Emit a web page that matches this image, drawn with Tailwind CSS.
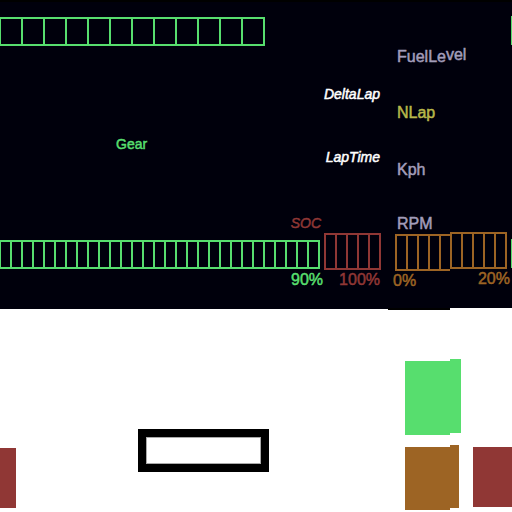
<!DOCTYPE html>
<html lang="en">
<head>
<meta charset="utf-8">
<title>Dashboard sprites</title>
<script src="https://cdn.jsdelivr.net/npm/@tailwindcss/browser@4"></script>
</head>
<body class="min-h-screen overflow-hidden bg-white font-['Liberation_Sans',Arial,sans-serif] leading-5">
<main>
  <section class="flex items-start" aria-label="Telemetry">
    <!-- Charge, gear and lap readouts -->
    <div class="min-w-0 flex-1 border-t-2 border-black bg-[#00000c] pt-[15px] pb-5">
      <div class="-ml-px flex h-[29px] w-[266px] border-2 border-r-0 border-[#57de6e] text-[#57de6e]">
        <i class="flex-1 border-r-2"></i><i class="flex-1 border-r-2"></i><i class="flex-1 border-r-2"></i><i class="flex-1 border-r-2"></i><i class="flex-1 border-r-2"></i><i class="flex-1 border-r-2"></i><i class="flex-1 border-r-2"></i><i class="flex-1 border-r-2"></i><i class="flex-1 border-r-2"></i><i class="flex-1 border-r-2"></i><i class="flex-1 border-r-2"></i><i class="flex-1 border-r-2"></i>
      </div>
      <p class="mt-[38px] pr-2 text-right text-sm leading-5 text-white italic [-webkit-text-stroke:0.5px]">DeltaLap</p>
      <div class="mt-[30px] flex h-[33px] justify-between pr-2 pl-[116px] text-sm leading-5">
        <p class="text-[#57de6e] [-webkit-text-stroke:0.5px]">Gear</p>
        <p class="self-end text-white italic [-webkit-text-stroke:0.5px]">LapTime</p>
      </div>
      <p class="mt-[46px] pr-[67px] text-right text-sm leading-5 text-[#903735] italic [-webkit-text-stroke:0.5px]">SOC</p>
      <div class="flex items-start gap-1 pr-[7px]">
        <div class="mt-[7px] -ml-px flex h-[29px] min-w-0 flex-1 border-2 border-r-0 border-[#57de6e] text-[#57de6e]">
          <i class="flex-1 border-r-2"></i><i class="flex-1 border-r-2"></i><i class="flex-1 border-r-2"></i><i class="flex-1 border-r-2"></i><i class="flex-1 border-r-2"></i><i class="flex-1 border-r-2"></i><i class="flex-1 border-r-2"></i><i class="flex-1 border-r-2"></i><i class="flex-1 border-r-2"></i><i class="flex-1 border-r-2"></i><i class="flex-1 border-r-2"></i><i class="flex-1 border-r-2"></i><i class="flex-1 border-r-2"></i><i class="flex-1 border-r-2"></i><i class="flex-1 border-r-2"></i><i class="flex-1 border-r-2"></i><i class="flex-1 border-r-2"></i><i class="flex-1 border-r-2"></i><i class="flex-1 border-r-2"></i><i class="flex-1 border-r-2"></i><i class="flex-1 border-r-2"></i><i class="flex-1 border-r-2"></i><i class="flex-1 border-r-2"></i><i class="flex-1 border-r-2"></i><i class="flex-1 border-r-2"></i><i class="flex-1 border-r-2"></i><i class="flex-1 border-r-2"></i><i class="flex-1 border-r-2"></i><i class="flex-1 border-r-2"></i>
        </div>
        <div class="flex h-[37px] w-[57px] border-2 border-r-0 border-[#903735] text-[#903735]">
          <i class="flex-1 border-r-2"></i><i class="flex-1 border-r-2"></i><i class="flex-1 border-r-2"></i><i class="flex-1 border-r-2"></i><i class="flex-1 border-r-2"></i>
        </div>
      </div>
      <div class="flex h-[19px] justify-end gap-4 pr-2 text-base leading-5 [-webkit-text-stroke:0.5px]">
        <p class="text-[#57de6e]">90%</p>
        <p class="text-[#903735]">100%</p>
      </div>
    </div>

    <!-- Fuel, lap count, speed and engine readouts -->
    <div class="w-[124px] shrink-0">
      <div class="flex border-t-2 border-black bg-[#00000c]">
        <div class="flex-1 pt-[45px] pb-5 text-base leading-5 text-[#a29dba] [-webkit-text-stroke:0.5px]">
          <p class="pl-[9px]">FuelLe<span class="align-[2px] leading-4">vel</span></p>
          <p class="mt-9 pl-[9px] text-[#b8b84a]">NLap</p>
          <p class="mt-[37px] pl-[9px]">Kph</p>
          <p class="mt-[34px] pl-[9px]">RPM</p>
          <div class="-mt-[2px] flex items-start pl-[7px] text-[#9d6424]">
            <div class="mt-[2px] flex h-[37px] w-[55px] border-2 border-r-0">
              <i class="w-[11px] border-r-2"></i><i class="w-[11px] border-r-2"></i><i class="w-[11px] border-r-2"></i><i class="w-[11px] border-r-2"></i>
            </div>
            <div class="flex h-[37px] w-[57px] border-2 border-r-0">
              <i class="flex-1 border-r-2"></i><i class="flex-1 border-r-2"></i><i class="flex-1 border-r-2"></i><i class="flex-1 border-r-2"></i><i class="flex-1 border-r-2"></i>
            </div>
          </div>
          <div class="-mt-[2px] flex h-[19px] justify-between pr-px pl-[5px] text-[#9d6424]">
            <p class="mt-[2px]">0%</p>
            <p>20%</p>
          </div>
        </div>
        <div class="w-px pt-[14px]">
          <div class="h-[29px] bg-[#57de6e]"></div>
          <div class="mt-[194px] h-[29px] bg-[#57de6e]"></div>
        </div>
      </div>
      <div class="h-[2px] w-[62px] bg-black"></div>
    </div>
  </section>

  <!-- Fill swatches and the empty gauge frame -->
  <section class="flex items-start" aria-label="Swatches">
    <div class="mt-[138px] h-[60px] w-4 bg-[#903735]"></div>
    <div class="mt-[119px] ml-[122px] h-[43px] w-[131px] border-8 border-black">
      <div class="h-full border border-[#aaa]"></div>
    </div>
    <div class="mt-[49px] ml-auto">
      <div class="flex items-start">
        <div class="mt-[2px] h-[74px] w-[45px] bg-[#57de6e]"></div>
        <div class="h-[74px] w-[11px] bg-[#57de6e]"></div>
      </div>
      <div class="mt-[10px] flex items-start">
        <div class="mt-[2px] h-[63px] w-[45px] bg-[#9d6424]"></div>
        <div class="h-[63px] w-[9px] bg-[#9d6424]"></div>
      </div>
    </div>
    <div class="mt-[137px] ml-3 h-[60px] w-[39px] bg-[#903735]"></div>
  </section>
</main>
</body>
</html>
